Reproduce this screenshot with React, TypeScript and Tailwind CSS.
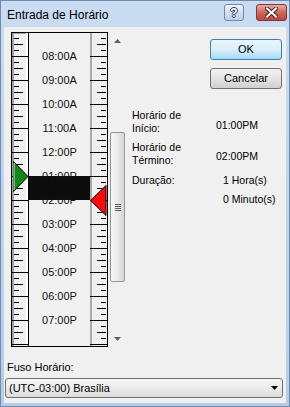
import React from 'react';

const HOURS = ['08:00A', '09:00A', '10:00A', '11:00A', '12:00P', '01:00P', '02:00P', '03:00P', '04:00P', '05:00P', '06:00P', '07:00P'];

const INNER_H = 313;
const tickYs = Array.from({ length: 60 }, (_, i) => 5 + i * 6).filter((y) => y < INNER_H);
// 0 = hour, 2 = half hour, 1/3 = quarter
const tickKind = (y: number) => ((((y - 23) / 6) % 4) + 4) % 4;

function LeftRuler() {
  return (
    <svg width="17" height={INNER_H} className="block shrink-0">
      <rect x="0" y="0" width="17" height={INNER_H} fill="#f0f0f0" />
      <rect x="0" y="0" width="2" height={INNER_H} fill="#a0a0a0" />
      <rect x="0" y="0" width="14" height="1" fill="#a0a0a0" />
      <rect x="14" y="0" width="2" height={INNER_H} fill="#ffffff" />
      <rect x="16" y="0" width="1" height={INNER_H} fill="#000000" />
      {tickYs.map((y) => {
        const k = tickKind(y);
        if (k === 0) return <rect key={y} x="0" y={y} width="16" height="1" fill="#000" />;
        return <rect key={y} x="2" y={y} width={k === 2 ? 9 : 5} height="1" fill="#000" />;
      })}
      {/* start marker */}
      <polygon points="1.5,128.5 16,143.5 1.5,158.5" fill="#13891a" stroke="#000" strokeWidth="1" />
      <line x1="2" y1="130" x2="2" y2="157" stroke="#d8e8d8" strokeWidth="1" />
    </svg>
  );
}

function RightRuler() {
  return (
    <svg width="17" height={INNER_H} className="block shrink-0">
      <rect x="0" y="0" width="17" height={INNER_H} fill="#f0f0f0" />
      <rect x="0" y="0" width="2" height={INNER_H} fill="#a9a9a9" />
      {tickYs.map((y) => {
        const k = tickKind(y);
        if (k === 0) return <rect key={y} x="0" y={y} width="17" height="1" fill="#000" />;
        return k === 2 ? (
          <rect key={y} x="7" y={y} width="9" height="1" fill="#000" />
        ) : (
          <rect key={y} x="11" y={y} width="5" height="1" fill="#000" />
        );
      })}
      {/* end marker */}
      <polygon points="0.5,167.5 16,152.5 16,182.5" fill="#ff0a0a" stroke="#000" strokeWidth="1" />
    </svg>
  );
}

function TimeRuler() {
  return (
    <div className="ml-[7px] flex h-[315px] w-[97px] shrink-0 border border-black bg-[#f0f0f0]">
      <LeftRuler />
      <div className="relative w-[61px] shrink-0 pt-[11px]">
        <div className="absolute left-0 right-0 top-[143px] h-[24px] bg-[#0c0c0c]" />
        {HOURS.map((h) => (
          <div key={h} className="relative flex h-[24px] items-center justify-center text-[11px] leading-[13px] text-[#111]">
            {h}
          </div>
        ))}
      </div>
      <RightRuler />
    </div>
  );
}

function ScrollBar() {
  return (
    <div className="ml-[1px] flex h-[315px] w-[17px] shrink-0 flex-col bg-[#f0f0f0]">
      <div className="flex h-[17px] items-center justify-center">
        <svg width="7" height="4"><polygon points="0,4 3.5,0 7,4" fill="#606060" /></svg>
      </div>
      <div className="flex flex-1 flex-col px-[1px]">
        <div className="mt-[83px] flex h-[150px] flex-col items-center justify-center rounded-[2px] border border-[#959595] bg-gradient-to-r from-[#f6f6f6] via-[#e9e9e9] to-[#d6d6d6]">
          <div className="flex flex-col gap-[1px]">
            <div className="h-[1px] w-[6px] bg-[#5f5f5f]" />
            <div className="h-[1px] w-[6px] bg-[#5f5f5f]" />
            <div className="h-[1px] w-[6px] bg-[#5f5f5f]" />
            <div className="h-[1px] w-[6px] bg-[#5f5f5f]" />
          </div>
        </div>
      </div>
      <div className="flex h-[17px] items-center justify-center">
        <svg width="7" height="4"><polygon points="0,0 3.5,4 7,0" fill="#606060" /></svg>
      </div>
    </div>
  );
}

function InfoPanel() {
  return (
    <div className="flex flex-1 flex-col text-[10.5px] leading-[13px] text-black">
      <div className="flex flex-col items-end pr-[4px]">
        <button className="mt-[7px] h-[21px] w-[72px] rounded-[3px] border border-[#3c7fb1] bg-gradient-to-b from-[#eaf6fd] via-[#d9f0fc] to-[#a7d9f5] text-[11px]">
          OK
        </button>
        <button className="mt-[8px] h-[21px] w-[72px] rounded-[3px] border border-[#707070] bg-gradient-to-b from-[#f2f2f2] via-[#e4e4e4] to-[#cfcfcf] text-[11px]">
          Cancelar
        </button>
      </div>
      <div className="mt-[20px] flex pl-[6px]">
        <div className="w-[84px]">Horário de<br />Início:</div>
        <div className="pt-[10px]">01:00PM</div>
      </div>
      <div className="mt-[6px] flex pl-[6px]">
        <div className="w-[84px]">Horário de<br />Término:</div>
        <div className="pt-[9px]">02:00PM</div>
      </div>
      <div className="mt-[7px] flex pl-[6px]">
        <div className="w-[91px]">Duração:</div>
        <div>1 Hora(s)</div>
      </div>
      <div className="mt-[6px] flex pl-[97px]">0 Minuto(s)</div>
    </div>
  );
}

export default function App() {
  return (
    <div className="flex h-[407px] w-[290px] flex-col border border-[#6f8cb0] bg-gradient-to-b from-[#c9dcf2] to-[#b6cde8] px-[3px] pb-[3px] font-['Liberation_Sans',Arial,sans-serif]">
      {/* Title bar */}
      <div className="flex h-[26px] shrink-0">
        <div className="flex flex-1 items-center pl-[3px] pt-[1px] text-[12px] text-black">Entrada de Horário</div>
        <div className="mt-[3px] flex h-[17px] items-start">
          <div className="flex h-[17px] w-[20px] items-center justify-center rounded-[3px] border border-[#7388a4] bg-gradient-to-b from-[#eef4fb] via-[#d3e1f1] to-[#bccfe8] text-[12px] font-bold leading-none text-white [text-shadow:1px_0_#2a3a50,-1px_0_#2a3a50,0_1px_#2a3a50,0_-1px_#2a3a50]">
            ?
          </div>
          <div className="ml-[12px] mr-[-1px] flex h-[17px] w-[31px] items-center justify-center rounded-[3px] border border-[#7a3a35] bg-gradient-to-b from-[#e9aaa2] via-[#d0655a] to-[#c2443a]">
            <svg width="13" height="11" viewBox="0 0 13 11">
              <path d="M2 1.5 L11 9.5 M11 1.5 L2 9.5" stroke="#3b2a2a" strokeWidth="4" strokeLinecap="square" />
              <path d="M2 1.5 L11 9.5 M11 1.5 L2 9.5" stroke="#ffffff" strokeWidth="2" strokeLinecap="square" />
            </svg>
          </div>
        </div>
      </div>

      {/* Client area */}
      <div className="flex flex-1 flex-col bg-[#f0f0f0] text-black">
        <div className="flex pt-[5px]">
          <TimeRuler />
          <ScrollBar />
          <InfoPanel />
        </div>
        <div className="mt-[14px] pl-[3px] text-[11px] leading-[13px]">Fuso Horário:</div>
        <div className="ml-[1px] mr-[3px] mt-[4px] flex h-[20px] items-center justify-between rounded-[3px] border border-[#707070] bg-gradient-to-b from-[#f7f7f7] via-[#ececec] to-[#dcdcdc] pl-[3px] pr-[4px] text-[11px]">
          <span>(UTC-03:00) Brasília</span>
          <svg width="7" height="4"><polygon points="0,0 3.5,4 7,0" fill="#000" /></svg>
        </div>
      </div>
    </div>
  );
}
